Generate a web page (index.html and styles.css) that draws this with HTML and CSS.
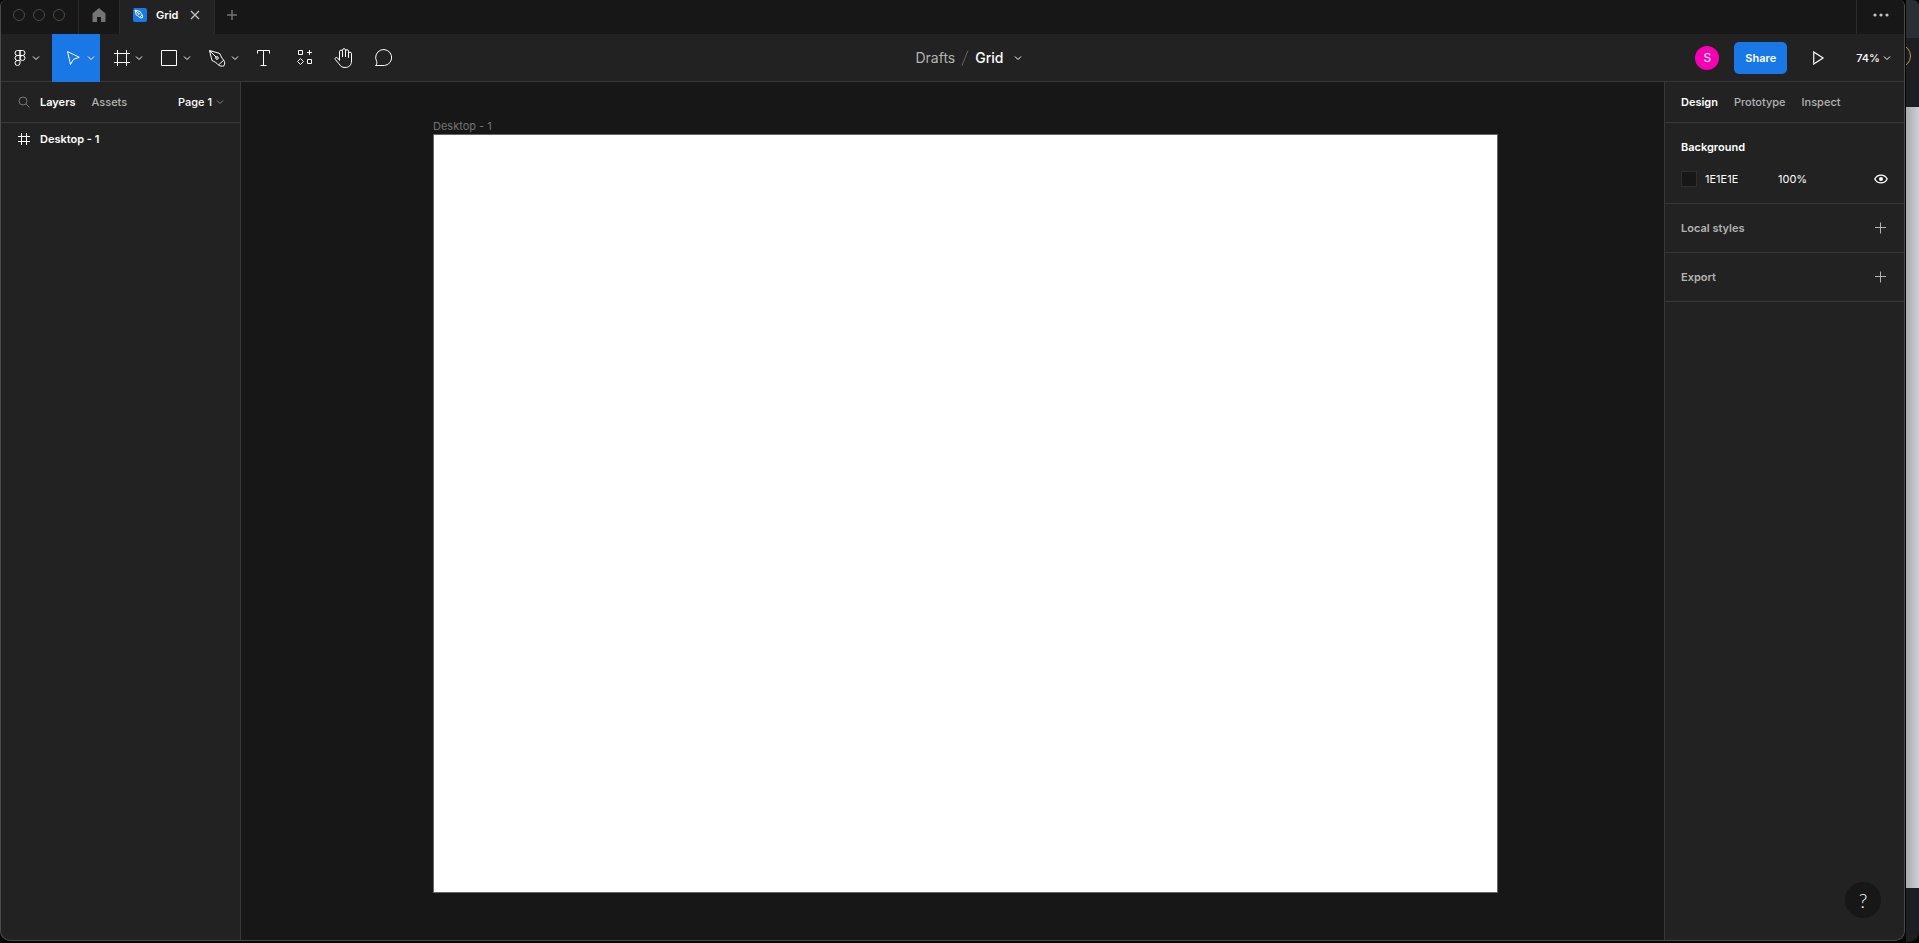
FILE: index.html
```
<!DOCTYPE html>
<html lang="en">
<head>
    <meta charset="UTF-8">
    <meta name="viewport" content="width=device-width, initial-scale=1.0">
    <title>Grid</title>
    <link rel="stylesheet" href="styles.css">
</head>
<body>
    <svg class="defs" aria-hidden="true">
        <symbol id="chevron" viewBox="0 0 8 8"><path d="M1 2.500 4 5.500 7 2.500"/></symbol>
        <symbol id="plus" viewBox="0 0 12 12"><path d="M6.500 .5v11M1 5.500h11"/></symbol>
        <symbol id="pen" viewBox="0 0 24 24"><path d="M4.500 4.500 7 14.500C9 15.500 11.500 16.500 13.500 19L18.700 14.200C16.800 12.300 15.800 9.800 14.800 7.500ZM4.500 4.500l6.800 6.800M13.500 19c1.500 1.200 3.500 1.500 5.500.8 1-2 .9-4-.3-5.600"/><circle cx="12" cy="12" r="1.300"/></symbol>
    </svg>

    <div class="desktop">
        <div class="window">
            <header class="tabbar">
                <div class="lights"><span></span><span></span><span></span></div>
                <button class="home" aria-label="Home">
                    <svg width="14" height="16" viewBox="0 0 14 16"><path d="M7 1 0.500 6.500V15H5V10H9V15H13.500V6.500Z"/></svg>
                </button>
                <div class="tab">
                    <span class="file-icon"><svg width="12" height="12" viewBox="2 2 20 20"><use href="#pen"/></svg></span>
                    <span class="tab-name">Grid</span>
                    <button class="close" aria-label="Close tab"><svg width="10" height="10" viewBox="0 0 10 10"><path d="M1 1l8 8M9 1 1 9"/></svg></button>
                </div>
                <button class="new-tab" aria-label="New tab"><svg width="12" height="12" viewBox="0 0 12 12"><path d="M6 1v10M1 6h10"/></svg></button>
                <button class="more" aria-label="More"><svg width="16" height="4" viewBox="0 0 16 4"><circle cx="2" cy="2" r="1.600"/><circle cx="8" cy="2" r="1.600"/><circle cx="14" cy="2" r="1.600"/></svg></button>
            </header>

            <div class="toolbar">
                <div class="tools">
                    <button class="tool menu" aria-label="Main menu">
                        <svg width="24" height="24" viewBox="0 0 24 24"><path d="M12 4.500H9.500a2.500 2.500 0 0 0 0 5H12ZM12 4.500h2.500a2.500 2.500 0 0 1 0 5H12ZM12 9.500H9.500a2.500 2.500 0 0 0 0 5H12ZM12 14.500H9.500a2.500 2.500 0 1 0 2.500 2.500Z"/><circle cx="14.500" cy="12" r="2.500"/></svg>
                        <svg class="chev" width="8" height="8"><use href="#chevron"/></svg>
                    </button>
                    <button class="tool active" aria-label="Move">
                        <svg width="24" height="24" viewBox="0 0 24 24"><path d="M6.500 5.500 18.300 11.300 12.500 13.300 9.500 18.500Z"/></svg>
                        <svg class="chev" width="8" height="8"><use href="#chevron"/></svg>
                    </button>
                    <button class="tool" aria-label="Frame">
                        <svg width="24" height="24" viewBox="0 0 24 24"><path d="M8.500 4v16M17.500 4v16M5 7.500h16M5 16.500h16"/></svg>
                        <svg class="chev" width="8" height="8"><use href="#chevron"/></svg>
                    </button>
                    <button class="tool" aria-label="Rectangle">
                        <svg width="24" height="24" viewBox="0 0 24 24"><path d="M4.500 4.500h15v15h-15Z"/></svg>
                        <svg class="chev" width="8" height="8"><use href="#chevron"/></svg>
                    </button>
                    <button class="tool" aria-label="Pen">
                        <svg width="24" height="24" viewBox="0 0 24 24"><use href="#pen"/></svg>
                        <svg class="chev" width="8" height="8"><use href="#chevron"/></svg>
                    </button>
                    <button class="tool single" aria-label="Text">
                        <svg width="24" height="24" viewBox="0 0 24 24"><path d="M5.500 7.500v-3h12v3M11.500 4.500v15M8.500 19.500h6"/></svg>
                    </button>
                    <button class="tool single" aria-label="Resources">
                        <svg width="24" height="24" viewBox="0 0 24 24"><path d="M6.500 4.500h4v4h-4ZM15.500 13.500h4v4h-4ZM17.500 4v5M15 6.500h5M8.500 12.500l3 3-3 3-3-3Z"/></svg>
                    </button>
                    <button class="tool single" aria-label="Hand">
                        <svg width="24" height="24" viewBox="0 0 24 24"><path d="M7.500 13V5.700a1.500 1.500 0 0 1 3 0V11V4.200a1.500 1.500 0 0 1 3 0V11V5.200a1.500 1.500 0 0 1 3 0V11.500V7.700a1.500 1.500 0 0 1 3 0V15c0 4-2.500 6.500-6.500 6.500-3 0-4.600-1.300-6-3.700L3.300 13.500c-1-1.800 1.200-2.700 2.400-1.500L7.500 14.500Z"/></svg>
                    </button>
                    <button class="tool single" aria-label="Comment">
                        <svg width="24" height="24" viewBox="0 0 24 24"><path d="M3.500 19.500c1.400-1 1.500-2 1.200-4A8 8 0 1 1 12.500 19.500Z"/></svg>
                    </button>
                </div>
                <div class="title">
                    <a href="#">Drafts</a>
                    <svg class="slash" width="8" height="16" viewBox="0 0 8 16"><path d="M1 15.500 7 .5"/></svg>
                    <button class="file-name">Grid <svg class="chev" width="8" height="8"><use href="#chevron"/></svg></button>
                </div>
                <div class="actions">
                    <span class="avatar">S</span>
                    <button class="share">Share</button>
                    <button class="play" aria-label="Present"><svg width="12" height="12" viewBox="0 0 12 12"><path d="M1.500 .8v10.400L9.500 6Z"/></svg></button>
                    <button class="zoom">74% <svg class="chev" width="8" height="8"><use href="#chevron"/></svg></button>
                </div>
            </div>

            <div class="main">
                <aside class="layers">
                    <div class="panel-head">
                        <button class="search" aria-label="Search"><svg width="12" height="12" viewBox="0 0 12 12"><circle cx="5" cy="5" r="4"/><path d="M8 8l3.500 3.500"/></svg></button>
                        <button class="panel-tab on">Layers</button>
                        <button class="panel-tab">Assets</button>
                        <button class="page">Page 1 <svg class="chev" width="8" height="8"><use href="#chevron"/></svg></button>
                    </div>
                    <button class="layer">
                        <svg width="12" height="12" viewBox="0 0 12 12"><path d="M3.500 0v12M8.500 0v12M0 3.500h12M0 8.500h12"/></svg>
                        Desktop - 1
                    </button>
                </aside>

                <main class="canvas">
                    <div class="frame-label">Desktop - 1</div>
                    <div class="frame"></div>
                </main>

                <aside class="props">
                    <div class="panel-head">
                        <button class="panel-tab on">Design</button>
                        <button class="panel-tab">Prototype</button>
                        <button class="panel-tab">Inspect</button>
                    </div>
                    <section class="background">
                        <h2>Background</h2>
                        <div class="color-row">
                            <span class="swatch"></span>
                            <input class="hex" type="text" value="1E1E1E" aria-label="Background color">
                            <input class="opacity" type="text" value="100%" aria-label="Opacity">
                            <button aria-label="Toggle visibility"><svg width="14" height="10" viewBox="0 0 14 10"><path d="M.8 5C3.300-.2 10.700-.2 13.200 5 10.700 10.200 3.300 10.200.8 5Z"/><circle cx="7" cy="5" r="2"/></svg></button>
                        </div>
                    </section>
                    <section class="row">
                        <h2>Local styles</h2>
                        <button aria-label="Add style"><svg width="12" height="12"><use href="#plus"/></svg></button>
                    </section>
                    <section class="row">
                        <h2>Export</h2>
                        <button aria-label="Add export"><svg width="12" height="12"><use href="#plus"/></svg></button>
                    </section>
                    <button class="help" aria-label="Help">?</button>
                </aside>
            </div>
        </div>

        <!-- window lying behind, only its right edge shows -->
        <div class="behind">
            <div class="behind-top"></div>
            <div class="behind-bar"><span class="ring"></span></div>
            <div class="behind-page"></div>
            <div class="behind-foot"></div>
        </div>
    </div>
</body>
</html>
```
FILE: styles.css
```
* {
    box-sizing: border-box;
}
body {
    margin: 0;
    background: #050505;
    color: #fff;
    font-family: Inter, "Liberation Sans", sans-serif;
    font-size: 11px;
    line-height: 16px;
}
button, input {
    margin: 0;
    padding: 0;
    border: none;
    background: none;
    color: inherit;
    font: inherit;
}
button {
    display: flex;
    align-items: center;
    cursor: pointer;
}
svg {
    display: block;
    flex: none;
    fill: none;
    stroke: currentColor;
}
h2 {
    margin: 0;
    font-size: 11px;
    font-weight: 600;
}
.defs {
    position: absolute;
    width: 0;
    height: 0;
}
.desktop {
    display: flex;
    height: 100vh;
    overflow: hidden;
}
.window {
    flex: 1;
    min-width: 0;
    display: flex;
    flex-direction: column;
    margin-bottom: 2px;
    border: 1px solid #4a4a4a;
    border-top: none;
    border-radius: 6px 6px 10px 10px;
    background: #222;
    overflow: hidden;
}

/* tab bar */
.tabbar {
    display: flex;
    height: 34px;
    background: #171717;
}
.lights {
    display: flex;
    gap: 8px;
    width: 78px;
    padding: 9px 0 0 12px;
    border-right: 1px solid #2c2c2c;
}
.lights span {
    width: 12px;
    height: 12px;
    border: 1px solid #4a4a4a;
    border-radius: 50%;
}
.home {
    width: 40px;
    padding-bottom: 4px;
    justify-content: center;
    color: #757575;
}
.home svg {
    fill: currentColor;
    stroke: none;
}
.tab {
    display: flex;
    align-items: center;
    width: 96px;
    padding: 0 14px 4px 13px;
    border: 1px solid #2c2c2c;
    border-width: 0 1px;
    background: #222;
    font-weight: 600;
}
.file-icon {
    display: flex;
    align-items: center;
    justify-content: center;
    width: 14px;
    height: 14px;
    border-radius: 2px;
    background: #1a77e6;
}
.file-icon svg {
    stroke-width: 2px;
}
.tab-name {
    margin-left: 9px;
}
.close {
    margin-left: auto;
    color: #c4c4c4;
}
.close svg {
    stroke-width: 1.300px;
}
.new-tab {
    padding: 0 0 4px 11px;
    color: #757575;
}
.new-tab svg {
    stroke-width: 1.500px;
}
.more {
    margin-left: auto;
    width: 48px;
    padding-bottom: 4px;
    justify-content: center;
    border-left: 1px solid #2c2c2c;
    color: #c4c4c4;
}
.more svg {
    fill: currentColor;
    stroke: none;
}

/* toolbar */
.toolbar {
    display: grid;
    grid-template-columns: 1fr auto 1fr;
    align-items: center;
    height: 48px;
    border-bottom: 1px solid #383838;
}
.tools {
    display: flex;
    height: 48px;
}
.tool {
    width: 48px;
    height: 48px;
    padding-left: 9px;
    gap: 2px;
}
.tool.menu {
    width: 51px;
    padding-left: 7px;
    gap: 0;
}
.tool.active {
    background: #1a77e6;
}
.tool.single {
    width: 40px;
    padding: 0;
    justify-content: center;
}
.title {
    display: flex;
    align-items: center;
    gap: 6px;
    padding-left: 32px;
    font-size: 14px;
}
.title a {
    color: #b3b3b3;
    text-decoration: none;
}
.slash {
    color: #666;
}
.file-name {
    gap: 10px;
    font-weight: 500;
}
.actions {
    display: flex;
    align-items: center;
    justify-content: flex-end;
    padding-right: 13px;
}
.avatar {
    width: 24px;
    height: 24px;
    border-radius: 50%;
    background: #f700b5;
    font-size: 12px;
    line-height: 24px;
    text-align: center;
}
.share {
    height: 32px;
    margin-left: 15px;
    padding: 0 11px;
    border-radius: 5px;
    background: #1a77e6;
    font-weight: 600;
}
.play {
    margin-left: 25px;
}
.play svg {
    width: 14px;
    height: 14px;
}
.zoom {
    margin-left: 30px;
    gap: 3px;
    font-weight: 500;
}

/* panels */
.main {
    flex: 1;
    min-height: 0;
    display: flex;
}
.layers {
    width: 240px;
    border-right: 1px solid #383838;
}
.props {
    display: flex;
    flex-direction: column;
    width: 240px;
    border-left: 1px solid #383838;
}
.panel-head {
    display: flex;
    align-items: center;
    height: 41px;
    padding: 0 16px;
    border-bottom: 1px solid #383838;
}
.panel-tab {
    margin-right: 16px;
    color: #b3b3b3;
    font-weight: 500;
}
.panel-tab.on {
    color: #fff;
    font-weight: 600;
}
.search {
    margin: 0 10px 0 1px;
    color: #757575;
}
.page {
    margin-left: auto;
    gap: 4px;
    font-weight: 500;
}
.page .chev {
    color: #858585;
}
.layer {
    width: 100%;
    height: 32px;
    padding-left: 17px;
    gap: 10px;
    font-weight: 600;
}
.canvas {
    flex: 1;
    display: flex;
    flex-direction: column;
    padding: 36px 166px 47px 192px;
    background: #171717;
}
.frame-label {
    color: #757575;
}
.frame {
    flex: 1;
    border: 1px solid #666;
    background: #fff;
}
.background {
    height: 81px;
    padding: 16px 16px 0;
    border-bottom: 1px solid #383838;
}
.color-row {
    display: flex;
    align-items: center;
    margin-top: 16px;
}
.swatch {
    width: 16px;
    height: 16px;
    border: 1px solid #2e2e2e;
    background: #171717;
}
.hex {
    width: 73px;
    margin-left: 8px;
}
.opacity {
    width: 60px;
}
.color-row button {
    margin-left: auto;
}
.color-row svg {
    stroke-width: 1.300px;
}
.color-row circle {
    fill: currentColor;
    stroke: none;
}
.row {
    display: flex;
    align-items: center;
    justify-content: space-between;
    height: 49px;
    padding: 0 18px 0 16px;
    border-bottom: 1px solid #383838;
    color: #b3b3b3;
}
.help {
    align-self: flex-end;
    justify-content: center;
    width: 36px;
    height: 36px;
    margin: auto 23px 22px 0;
    border-radius: 50%;
    background: #171717;
    font-family: Lato, Inter, sans-serif;
    font-size: 20px;
    font-weight: 300;
}

/* strip on the right */
.behind {
    display: flex;
    flex-direction: column;
    width: 14px;
    margin-bottom: 1px;
    padding-left: 1px;
    border-radius: 0 6px 10px 0;
    overflow: hidden;
}
.behind-top {
    height: 38px;
    background: #2b2e32;
}
.behind-bar {
    position: relative;
    height: 69px;
    background: #1d1e22;
    overflow: hidden;
}
.ring {
    position: absolute;
    top: 6px;
    right: 8px;
    width: 24px;
    height: 24px;
    border: 1px solid #b8943c;
    border-radius: 50%;
}
.behind-page {
    flex: 1;
    background: linear-gradient(to right, #aaabaf, #cfd0d4);
}
.behind-foot {
    height: 54px;
    background: #1d1e22;
}
```
